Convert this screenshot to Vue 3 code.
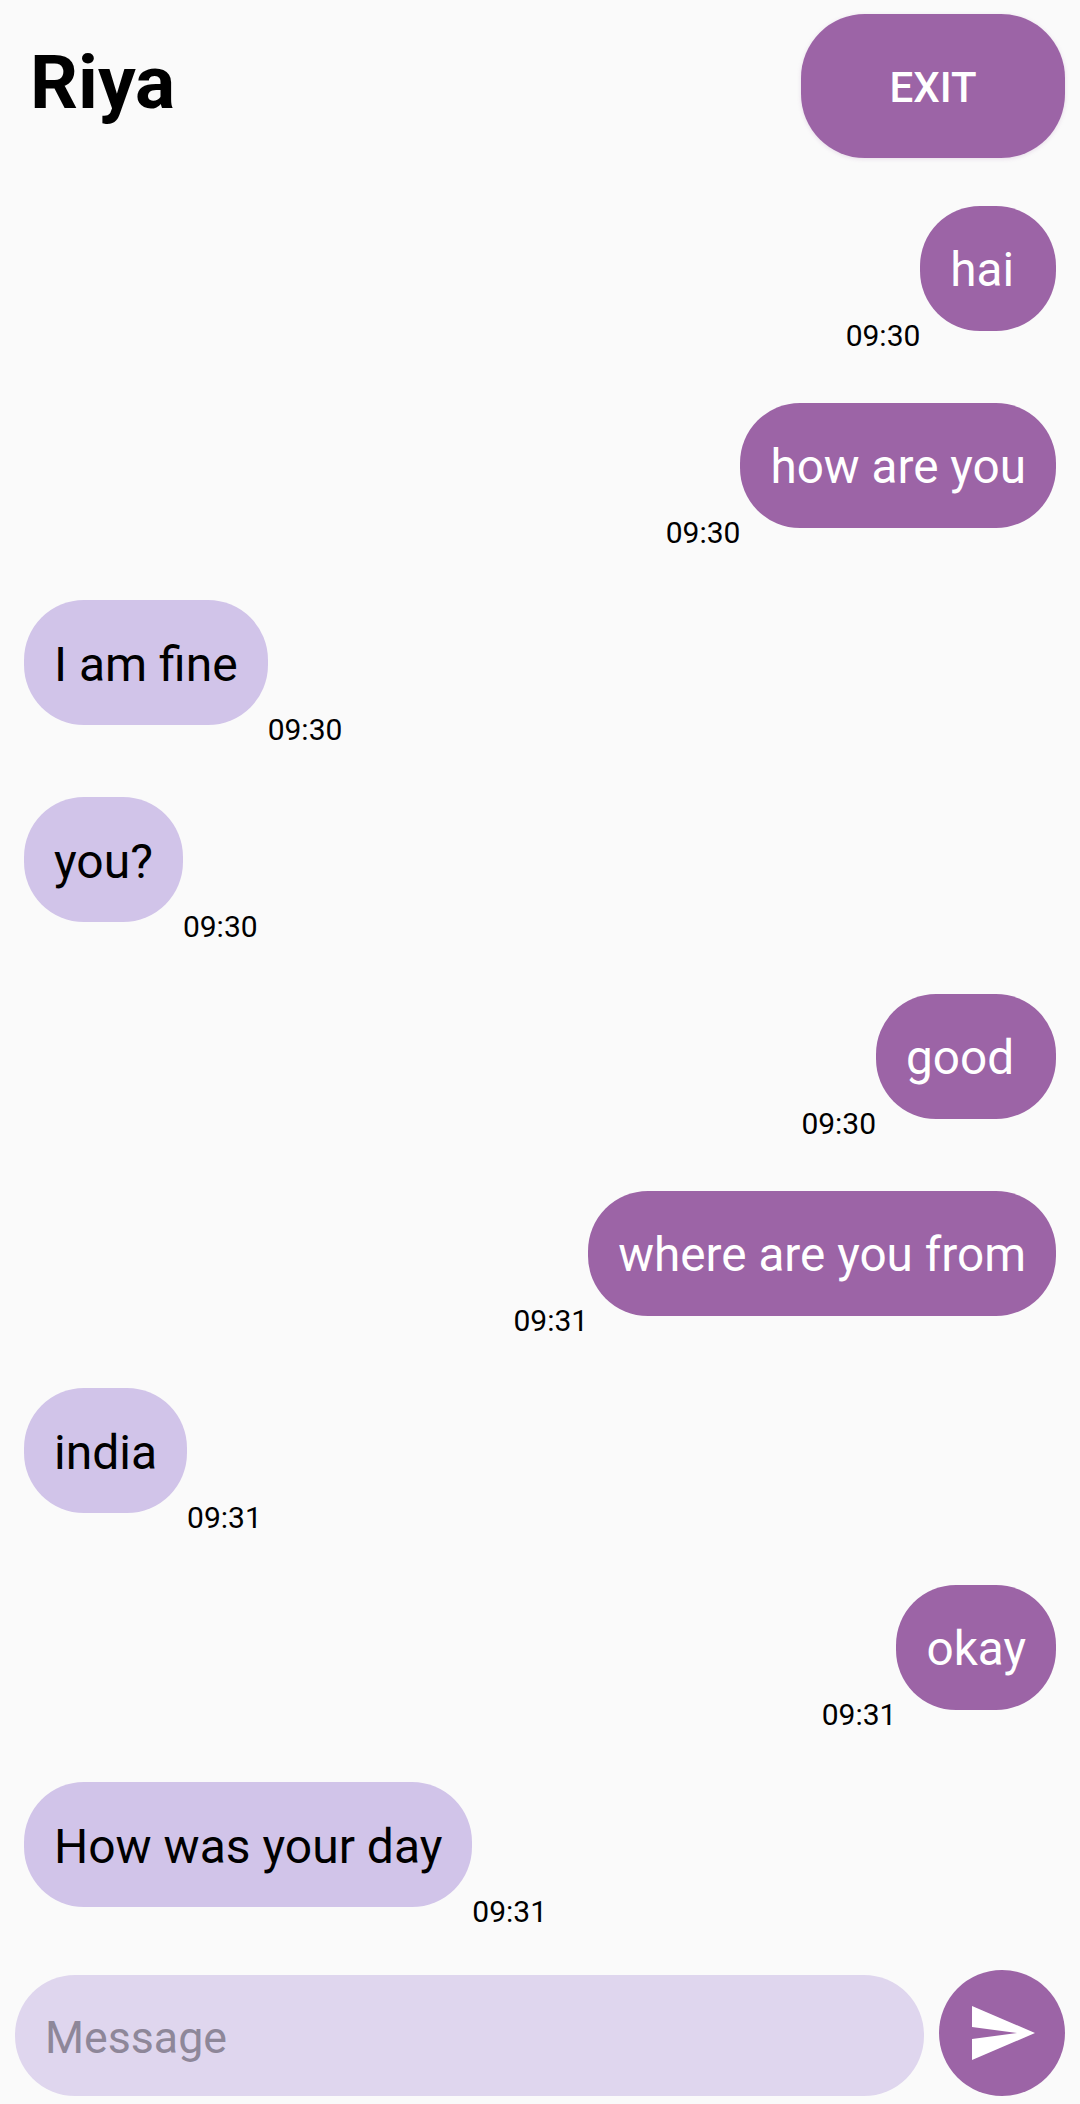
<template>
    <div class="chat-view">
        <header class="chat-header">
            <h1>Riya</h1>
            <button class="exit-btn">EXIT</button>
        </header>

        <section class="messages">
            <div v-for="msg in messages" :key="msg.id" class="row" :class="msg.mine ? 'mine' : 'theirs'">
                <div class="bubble">{{ msg.text }}</div>
                <span class="time">{{ msg.time }}</span>
            </div>
        </section>

        <footer class="composer">
            <input class="message-input" type="text" placeholder="Message" />
            <button class="send-btn" aria-label="Send">
                <svg viewBox="0 0 24 24" width="72" height="72">
                    <path d="M2.01 21L23 12 2.01 3 2 10l15 2-15 2z" fill="#fff" />
                </svg>
            </button>
        </footer>
    </div>
</template>

<script setup>
// Temporary chat data
const messages = [
    { id: 1, text: 'hai ', time: '09:30', mine: true },
    { id: 2, text: 'how are you', time: '09:30', mine: true },
    { id: 3, text: 'I am fine', time: '09:30', mine: false },
    { id: 4, text: 'you?', time: '09:30', mine: false },
    { id: 5, text: 'good ', time: '09:30', mine: true },
    { id: 6, text: 'where are you from', time: '09:31', mine: true },
    { id: 7, text: 'india', time: '09:31', mine: false },
    { id: 8, text: 'okay', time: '09:31', mine: true },
    { id: 9, text: 'How was your day', time: '09:31', mine: false }
]
</script>

<style>
html, body {
    margin: 0;
    background: #fafafa;
}
</style>

<style scoped>
.chat-view {
    height: 2104px;
    box-sizing: border-box;
    background: #fafafa;
    font-family: Roboto, sans-serif;
    display: flex;
    flex-direction: column;
    overflow: hidden;
}
.chat-header {
    display: flex;
    justify-content: space-between;
    align-items: center;
    padding: 14px 15px 0 30px;
}
.chat-header h1 {
    margin: 0 0 8px;
    font-size: 75px;
    font-weight: 700;
    color: #000;
}
.exit-btn {
    width: 264px;
    height: 144px;
    padding: 2px 0 0;
    border: none;
    border-radius: 64px;
    background: #9c64a6;
    color: #fff;
    font-family: inherit;
    font-size: 42px;
    font-weight: 500;
    box-shadow: 0 1px 4px rgba(156, 100, 166, 0.2);
}
.messages {
    flex: 1;
    display: flex;
    flex-direction: column;
    gap: 52px;
    padding: 48px 24px 0;
}
.row {
    display: flex;
    align-items: flex-start;
    height: 145px;
}
.row.mine {
    flex-direction: row-reverse;
}
.bubble {
    height: 125px;
    line-height: 129px;
    padding: 0 30px;
    border-radius: 60px;
    font-size: 48px;
    white-space: pre;
}
.mine .bubble {
    background: #9c64a6;
    color: #fff;
    font-size: 47.7px;
}
.theirs .bubble {
    background: #d1c4e9;
    color: #000;
}
.time {
    margin-top: 112px;
    font-size: 30px;
    line-height: 35px;
    color: #000;
}
.composer {
    display: flex;
    align-items: flex-end;
    gap: 15px;
    padding: 0 15px 8px;
}
.message-input {
    flex: 1;
    min-width: 0;
    height: 121px;
    box-sizing: border-box;
    padding: 4px 30px 0;
    border: none;
    outline: none;
    border-radius: 60px;
    background: #dfd6ee;
    font-family: inherit;
    font-size: 44.7px;
    color: #000;
}
.message-input::placeholder {
    color: #8e8799;
    opacity: 1;
}
.send-btn {
    width: 126px;
    height: 126px;
    flex: none;
    padding: 0;
    border: none;
    border-radius: 50%;
    background: #9c64a6;
    display: flex;
    align-items: center;
    justify-content: center;
}
</style>
